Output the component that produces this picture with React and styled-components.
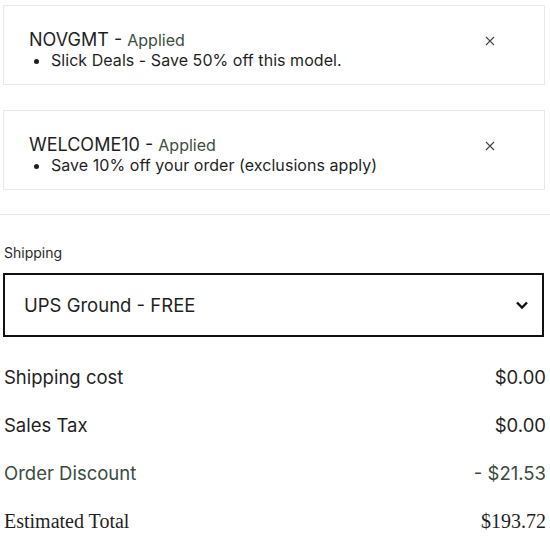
import React from "react";
import styled, { createGlobalStyle } from "styled-components";

const Global = createGlobalStyle`
  html, body { margin: 0; padding: 0; background: #fff; }
  body { font-family: Inter, "Noto Sans", sans-serif; color: #1f1f1f; }
`;

const Page = styled.div`
  width: 550px;
  display: flex;
  flex-direction: column;
`;

const Coupons = styled.div`
  display: flex;
  flex-direction: column;
  gap: 25px;
  padding: 5px 5px 0 3px;
`;

const CouponCard = styled.div`
  border: 1px solid #e9e9e9;
  height: 80px;
  box-sizing: border-box;
  padding: 23px 48px 0 25px;
  display: flex;
  justify-content: space-between;
  align-items: flex-start;
`;

const CouponBody = styled.div`
  display: flex;
  flex-direction: column;
`;

const CouponTitle = styled.div`
  font-size: 18px;
  line-height: 21px;
  color: #1f1f1f;
`;

const Applied = styled.span`
  font-size: 16px;
  color: #3d4d41;
`;

const CouponList = styled.ul`
  margin: 0;
  padding: 0 0 0 22px;
  font-size: 16px;
  letter-spacing: 0.05px;
  line-height: 19px;
  color: #1f1f1f;
`;

const CloseBtn = styled.button`
  border: none;
  background: none;
  padding: 0;
  margin-top: 6px;
  width: 12px;
  height: 12px;
  display: flex;
  align-items: center;
  justify-content: center;
  cursor: pointer;
`;

const Divider = styled.hr`
  border: none;
  border-top: 1px solid #e9e9e9;
  margin: 24px 0 0 0;
  width: 100%;
`;

const ShipSection = styled.div`
  padding: 0 6px 0 3px;
  display: flex;
  flex-direction: column;
`;

const Label = styled.div`
  font-size: 14px;
  line-height: 18px;
  color: #2a2a2a;
  margin: 29px 0 0 1px;
`;

const Select = styled.div`
  margin-top: 11px;
  height: 64px;
  box-sizing: border-box;
  border: 2px solid #111;
  display: flex;
  align-items: center;
  justify-content: space-between;
  padding: 0 13px 0 19px;
  font-size: 18.5px;
  color: #1f1f1f;
`;

const Rows = styled.div`
  display: flex;
  flex-direction: column;
  padding: 16px 4px 0 4px;
`;

const Row = styled.div`
  display: flex;
  justify-content: space-between;
  align-items: center;
  height: 48px;
  font-size: ${p => (p.$serif ? "20px" : "18.5px")};
  color: ${p => (p.$accent ? "#3b4a40" : "#1f1f1f")};
  font-family: ${p => (p.$serif ? '"Liberation Serif", serif' : 'Inter, sans-serif')};
`;

function Coupon({ code, note }) {
  return (
    <CouponCard>
      <CouponBody>
        <CouponTitle>
          {code} - <Applied>Applied</Applied>
        </CouponTitle>
        <CouponList>
          <li>{note}</li>
        </CouponList>
      </CouponBody>
      <CloseBtn aria-label="Remove">
        <svg width="10" height="10" viewBox="0 0 10 10">
          <path d="M1 1L9 9M9 1L1 9" stroke="#444" strokeWidth="1.1" />
        </svg>
      </CloseBtn>
    </CouponCard>
  );
}

export default function App() {
  return (
    <Page>
      <Global />
      <Coupons>
        <Coupon code="NOVGMT" note="Slick Deals - Save 50% off this model." />
        <Coupon code="WELCOME10" note="Save 10% off your order (exclusions apply)" />
      </Coupons>
      <Divider />
      <ShipSection>
        <Label>Shipping</Label>
        <Select>
          <span>UPS Ground - FREE</span>
          <svg width="14" height="10" viewBox="0 0 14 10">
            <path d="M2 2.5L7 7.5L12 2.5" fill="none" stroke="#111" strokeWidth="2.4" />
          </svg>
        </Select>
      </ShipSection>
      <Rows>
        <Row><span>Shipping cost</span><span>$0.00</span></Row>
        <Row><span>Sales Tax</span><span>$0.00</span></Row>
        <Row $accent><span>Order Discount</span><span>- $21.53</span></Row>
        <Row $serif><span>Estimated Total</span><span>$193.72</span></Row>
      </Rows>
    </Page>
  );
}
